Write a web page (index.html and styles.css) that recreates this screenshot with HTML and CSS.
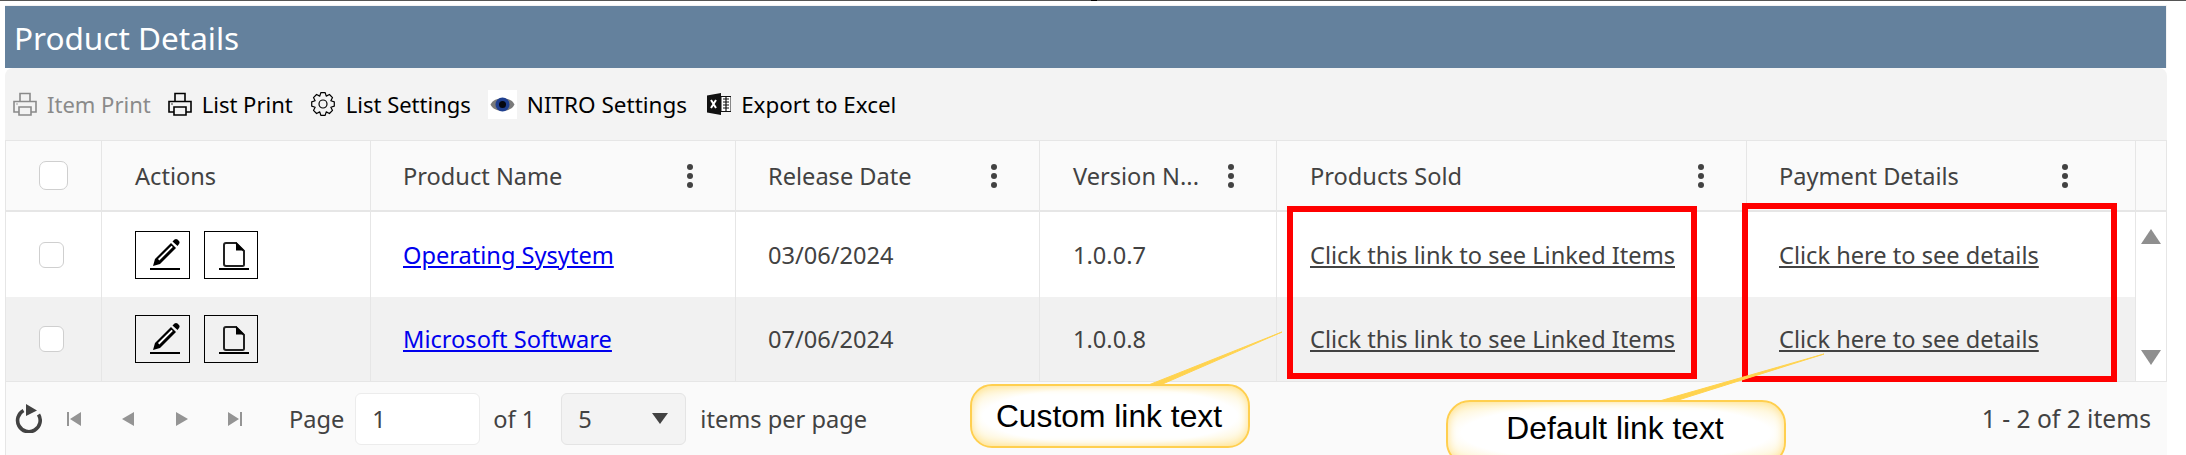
FILE: index.html
```html
<!DOCTYPE html>
<html lang="en">
<head>
<meta charset="utf-8">
<title>Product Details</title>
<link rel="stylesheet" href="styles.css">
</head>
<body>
<div class="page">
  <span class="top-mark"></span>
  <div class="panel">
    <h1 class="title">Product Details</h1>
    <div class="toolbar">
      <span class="tool tool-item disabled"><svg class="ic" viewBox="0 0 24 24" fill="none" stroke="currentColor" stroke-width="1.6"><path d="M7 9V1.500h10V9M6 20H1V9.500h22V20h-5M6 15h12v8H6zM3.500 12h1"/></svg>Item Print</span>
      <span class="tool tool-list"><svg class="ic" viewBox="0 0 24 24" fill="none" stroke="currentColor" stroke-width="1.6"><path d="M7 9V1.500h10V9M6 20H1V9.500h22V20h-5M6 15h12v8H6zM3.500 12h1"/></svg>List Print</span>
      <span class="tool tool-gear"><svg class="ic" viewBox="0 0 24 24" fill="none" stroke="currentColor" stroke-width="1.200" stroke-linejoin="round"><circle cx="12" cy="12" r="4"/><polygon points="23.29,9.81 23.29,14.19 19.85,15.25 21.53,18.43 18.43,21.53 15.25,19.85 14.19,23.29 9.81,23.29 8.75,19.85 5.57,21.53 2.47,18.43 4.15,15.25 .71,14.19 .71,9.81 4.15,8.75 2.47,5.57 5.57,2.47 8.75,4.15 9.81,.71 14.19,.71 15.25,4.15 18.43,2.47 21.53,5.57 19.85,8.75"/></svg>List Settings</span>
      <span class="tool tool-nitro"><span class="eye-box"><svg class="eye" viewBox="0 0 29 29"><path d="M2.500 14.500C6 6 23 6 26.500 14.500 23 23 6 23 2.500 14.500z" fill="#7a7a7a"/><circle cx="14.500" cy="14.500" r="7" fill="#1f3f8f"/><circle cx="14.500" cy="14.500" r="3.500" fill="#05070f"/></svg></span>NITRO Settings</span>
      <span class="tool tool-excel"><svg class="ic" viewBox="0 0 24 24"><path d="M0 3.500 14 1v22L0 20.500z" fill="#111"/><path d="M4 8l5 8M9 8l-5 8" stroke="#fff" stroke-width="2" fill="none"/><path d="M14 4.500h10v15H14z" fill="#fff" stroke="#111"/><path d="M16 7h6M16 10h6M16 13h6M16 16h6M19 5v14" stroke="#111" stroke-width="1.200" fill="none"/></svg>Export to Excel</span>
    </div>
    <div class="grid">
      <div class="cell head"><span class="check check-head"></span></div>
      <div class="cell head pad-actions"><span>Actions</span></div>
      <div class="cell head pad"><span>Product Name</span><span class="kebab"><i></i><i></i><i></i></span></div>
      <div class="cell head pad"><span>Release Date</span><span class="kebab"><i></i><i></i><i></i></span></div>
      <div class="cell head pad pad-more"><span>Version N...</span><span class="kebab"><i></i><i></i><i></i></span></div>
      <div class="cell head pad pad-more"><span>Products Sold</span><span class="kebab"><i></i><i></i><i></i></span></div>
      <div class="cell head pad pad-wide"><span>Payment Details</span><span class="kebab"><i></i><i></i><i></i></span></div>
      <div class="cell head last"></div>

      <div class="cell"><span class="check"></span></div>
      <div class="cell pad-actions btns">
        <span class="btn"><svg viewBox="0 0 55 48"><path d="M15 38h30" stroke="#000" stroke-width="2"/><path d="M18 35l2-7 16-16 5 5-16 16z" fill="#000"/><path d="M23 28 36.500 14.800l1.300 1.200L24.300 29.500z" fill="#fff"/><path d="M37.500 10.500l2-2c1-.8 2-.8 3 0l1.500 1.500c.8 1 .8 2 0 3l-1.500 2z" fill="#000"/></svg></span>
        <span class="btn btn2"><svg viewBox="0 0 54 48"><path d="M15 38h30" stroke="#000" stroke-width="2"/><path d="M22 12h10l8 8v13.500q0 1.500-1.500 1.500H22q-2 0-2-2V14q0-2 2-2z" fill="none" stroke="#222" stroke-width="2"/><path d="M32 11l8.500 8.500H32z" fill="#000"/></svg></span>
      </div>
      <div class="cell pad"><a class="plink" href="#">Operating Sysytem</a></div>
      <div class="cell pad">03/06/2024</div>
      <div class="cell pad pad-more">1.0.0.7</div>
      <div class="cell pad pad-more"><a class="dlink" href="#">Click this link to see Linked Items</a></div>
      <div class="cell pad"><a class="dlink" href="#">Click here to see details</a></div>
      <div class="cell last scroll-up"><span class="tri-up"></span></div>

      <div class="cell alt"><span class="check"></span></div>
      <div class="cell alt pad-actions btns">
        <span class="btn"><svg viewBox="0 0 55 48"><path d="M15 38h30" stroke="#000" stroke-width="2"/><path d="M18 35l2-7 16-16 5 5-16 16z" fill="#000"/><path d="M23 28 36.500 14.800l1.300 1.200L24.300 29.500z" fill="#fff"/><path d="M37.500 10.500l2-2c1-.8 2-.8 3 0l1.500 1.500c.8 1 .8 2 0 3l-1.500 2z" fill="#000"/></svg></span>
        <span class="btn btn2"><svg viewBox="0 0 54 48"><path d="M15 38h30" stroke="#000" stroke-width="2"/><path d="M22 12h10l8 8v13.500q0 1.500-1.500 1.500H22q-2 0-2-2V14q0-2 2-2z" fill="none" stroke="#222" stroke-width="2"/><path d="M32 11l8.500 8.500H32z" fill="#000"/></svg></span>
      </div>
      <div class="cell alt pad"><a class="plink" href="#">Microsoft Software</a></div>
      <div class="cell alt pad">07/06/2024</div>
      <div class="cell alt pad pad-more">1.0.0.8</div>
      <div class="cell alt pad pad-more"><a class="dlink" href="#">Click this link to see Linked Items</a></div>
      <div class="cell alt pad"><a class="dlink" href="#">Click here to see details</a></div>
      <div class="cell last scroll-down"><span class="tri-down"></span></div>
    </div>
    <div class="pager">
      <svg class="refresh" viewBox="0 0 27 29"><path d="M8.500 6.500a11.300 11.300 0 1 0 15 4" fill="none" stroke="#424242" stroke-width="3.600"/><path d="M11 0l11 6.500L11 12z" fill="#424242"/></svg>
      <span class="nav nav-first"><svg viewBox="0 0 14 14"><path d="M0 0h2v14H0zM14 0v14L3 7z" fill="#949494"/></svg></span>
      <span class="nav nav-prev"><svg viewBox="0 0 12 14"><path d="M12 0v14L0 7z" fill="#949494"/></svg></span>
      <span class="nav nav-next"><svg viewBox="0 0 12 14"><path d="M0 0v14l12-7z" fill="#949494"/></svg></span>
      <span class="nav nav-last"><svg viewBox="0 0 14 14"><path d="M12 0h2v14h-2zM0 0v14l11-7z" fill="#949494"/></svg></span>
      <span class="page-label">Page</span>
      <span class="page-input">1</span>
      <span class="of">of 1</span>
      <span class="size-select"><span>5</span><span class="tri-select"></span></span>
      <span class="per">items per page</span>
      <span class="range">1 - 2 of 2 items</span>
    </div>
  </div>

  <div class="redbox red1"></div>
  <div class="redbox red2"></div>
  <svg class="leaders" viewBox="0 0 2186 455"><path d="M1146 386 1282 332 1158 386z M1656 402 1824 354 1672 402z" fill="#ffd34f" stroke="#ffd34f" stroke-width="1"/></svg>
  <div class="callout call1">Custom link text</div>
  <div class="callout call2">Default link text</div>
</div>
</body>
</html>
```
FILE: styles.css
```css
* { box-sizing: border-box; }
html, body { margin: 0; padding: 0; background: #fff; }
body { overflow: hidden; }
.page {
  position: relative;
  width: 2186px;
  height: 455px;
  overflow: hidden;
  padding: 5px 19px 0 5px;
  font-family: "Noto Sans", "Open Sans", sans-serif;
  font-size: 23.6px;
  color: #424242;
}
.page::before {
  content: "";
  position: absolute;
  left: 0;
  top: 0;
  right: 0;
  height: 1px;
  background: #555;
}
.top-mark {
  position: absolute;
  left: 1091px;
  top: 0;
  width: 6px;
  height: 1px;
  background: #000;
  z-index: 1;
}
.panel { display: flex; flex-direction: column; height: 450px; }
.title {
  margin: 0;
  height: 63px;
  padding-left: 9px;
  background: #64819d;
  border-top: 1px solid #f3f3f3;
  border-right: 1px solid #f3f3f3;
  color: #fff;
  font-size: 31.500px;
  font-weight: 400;
  line-height: 64px;
}
.toolbar {
  display: flex;
  align-items: center;
  height: 72px;
  background: #f3f3f3;
  border-radius: 8px 8px 0 0;
  color: #000;
  font-size: 22px;
  white-space: nowrap;
}
.tool { display: flex; align-items: center; }
.tool .ic { width: 24px; height: 24px; margin-right: 10px; flex: none; }
.disabled { color: #8a8a8a; }
.tool-item { margin-left: 8px; }
.tool-list { margin-left: 17px; }
.tool-gear { margin-left: 18px; }
.tool-gear .ic { margin-right: 11px; }
.tool-nitro { margin-left: 17px; font-size: 22.500px; }
.tool-excel { margin-left: 20px; font-size: 22.400px; }
.eye-box {
  display: flex;
  width: 29px;
  height: 29px;
  margin-right: 10px;
  background: #fff;
}
.eye { width: 29px; height: 29px; }
.grid {
  display: grid;
  grid-template-columns: 96px 269px 365px 304px 237px 470px 389px 30px;
  grid-template-rows: 71px 85px 84px;
  border-left: 1px solid #e6e6e6;
  border-right: 1px solid #e6e6e6;
  border-top: 1px solid #e6e6e6;
}
.cell {
  display: flex;
  align-items: center;
  justify-content: center;
  background: #fff;
  border-right: 1px solid #e6e6e6;
  white-space: nowrap;
  min-width: 0;
}
.head { background: #fafafa; border-bottom: 2px solid #e6e6e6; }
.alt { background: #f1f1f1; }
.pad { justify-content: space-between; padding: 0 42px 0 32px; }
.pad-more { padding-left: 33px; }
.pad-wide { padding-right: 67px; }
.pad-actions { justify-content: flex-start; padding-left: 33px; }
.last { border-right: 0; }
.check {
  display: block;
  width: 25px;
  height: 26px;
  margin-right: 5px;
  background: #fff;
  border: 1px solid #cfcfcf;
  border-radius: 6px;
}
.check-head { width: 29px; height: 29px; margin-right: 0; border-radius: 7px; }
.kebab { display: flex; flex-direction: column; gap: 3px; }
.kebab i { display: block; width: 6px; height: 6px; border-radius: 50%; background: #424242; }
.btns { gap: 14px; }
.btn {
  display: block;
  flex: none;
  width: 55px;
  height: 48px;
  border: 1px solid #000;
}
.btn2 { width: 54px; }
.btn svg { display: block; width: calc(100% + 2px); height: calc(100% + 2px); margin: -1px; }
.plink { color: #00e; text-decoration: underline; }
.dlink { color: #424242; text-decoration: underline; }
.scroll-up { align-items: flex-start; padding-top: 17px; }
.scroll-down { align-items: flex-end; padding-bottom: 16px; }
.tri-up, .tri-down, .tri-select { display: block; width: 0; height: 0; border-style: solid; border-color: transparent; }
.tri-up { border-width: 0 10px 15px; border-bottom-color: #8f8f8f; }
.tri-down { border-width: 15px 10px 0; border-top-color: #8f8f8f; }
.tri-select { border-width: 11px 8px 0; border-top-color: #424242; }
.pager {
  display: flex;
  align-items: center;
  flex: 1;
  padding: 0 16px 0 9px;
  background: #fafafa;
  border-left: 1px solid #e6e6e6;
  border-top: 1px solid #e6e6e6;
  white-space: nowrap;
}
.refresh { width: 27px; height: 29px; flex: none; }
.nav { display: block; height: 14px; flex: none; }
.nav svg { display: block; height: 14px; }
.nav-first { width: 14px; margin-left: 25px; }
.nav-prev { width: 12px; margin-left: 41px; }
.nav-next { width: 12px; margin-left: 42px; }
.nav-last { width: 14px; margin-left: 40px; }
.page-label { margin-left: 47px; }
.page-input {
  display: flex;
  align-items: center;
  width: 125px;
  height: 52px;
  margin-left: 11px;
  padding-left: 16px;
  background: #fff;
  border: 1px solid #ececec;
  border-radius: 6px;
}
.of { margin-left: 13px; }
.size-select {
  display: flex;
  align-items: center;
  justify-content: space-between;
  width: 125px;
  height: 52px;
  margin-left: 26px;
  padding: 0 17px 0 16px;
  background: #f3f3f3;
  border: 1px solid #e4e4e4;
  border-radius: 6px;
}
.per { margin-left: 14px; }
.range { margin-left: auto; font-size: 24.600px; }
.redbox {
  position: absolute;
  border: 6px solid #f00;
}
.red1 { left: 1287px; top: 206px; width: 410px; height: 173px; }
.red2 { left: 1742px; top: 203px; width: 375px; height: 179px; }
.leaders { position: absolute; left: 0; top: 0; width: 2186px; height: 455px; pointer-events: none; }
.callout {
  position: absolute;
  display: flex;
  align-items: center;
  justify-content: center;
  padding-right: 2px;
  border: 2px solid #ffcf4f;
  background: radial-gradient(ellipse at center, #fff 65%, #ffeeb5 100%);
  box-shadow: inset 0 0 8px #ffe08a;
  font-family: "Liberation Sans", Arial, sans-serif;
  font-size: 31.800px;
  color: #000;
}
.call1 { left: 970px; top: 384px; width: 280px; height: 64px; border-radius: 22px; }
.call2 { left: 1446px; top: 400px; width: 340px; height: 66px; border-radius: 24px; padding-bottom: 10px; }
```
